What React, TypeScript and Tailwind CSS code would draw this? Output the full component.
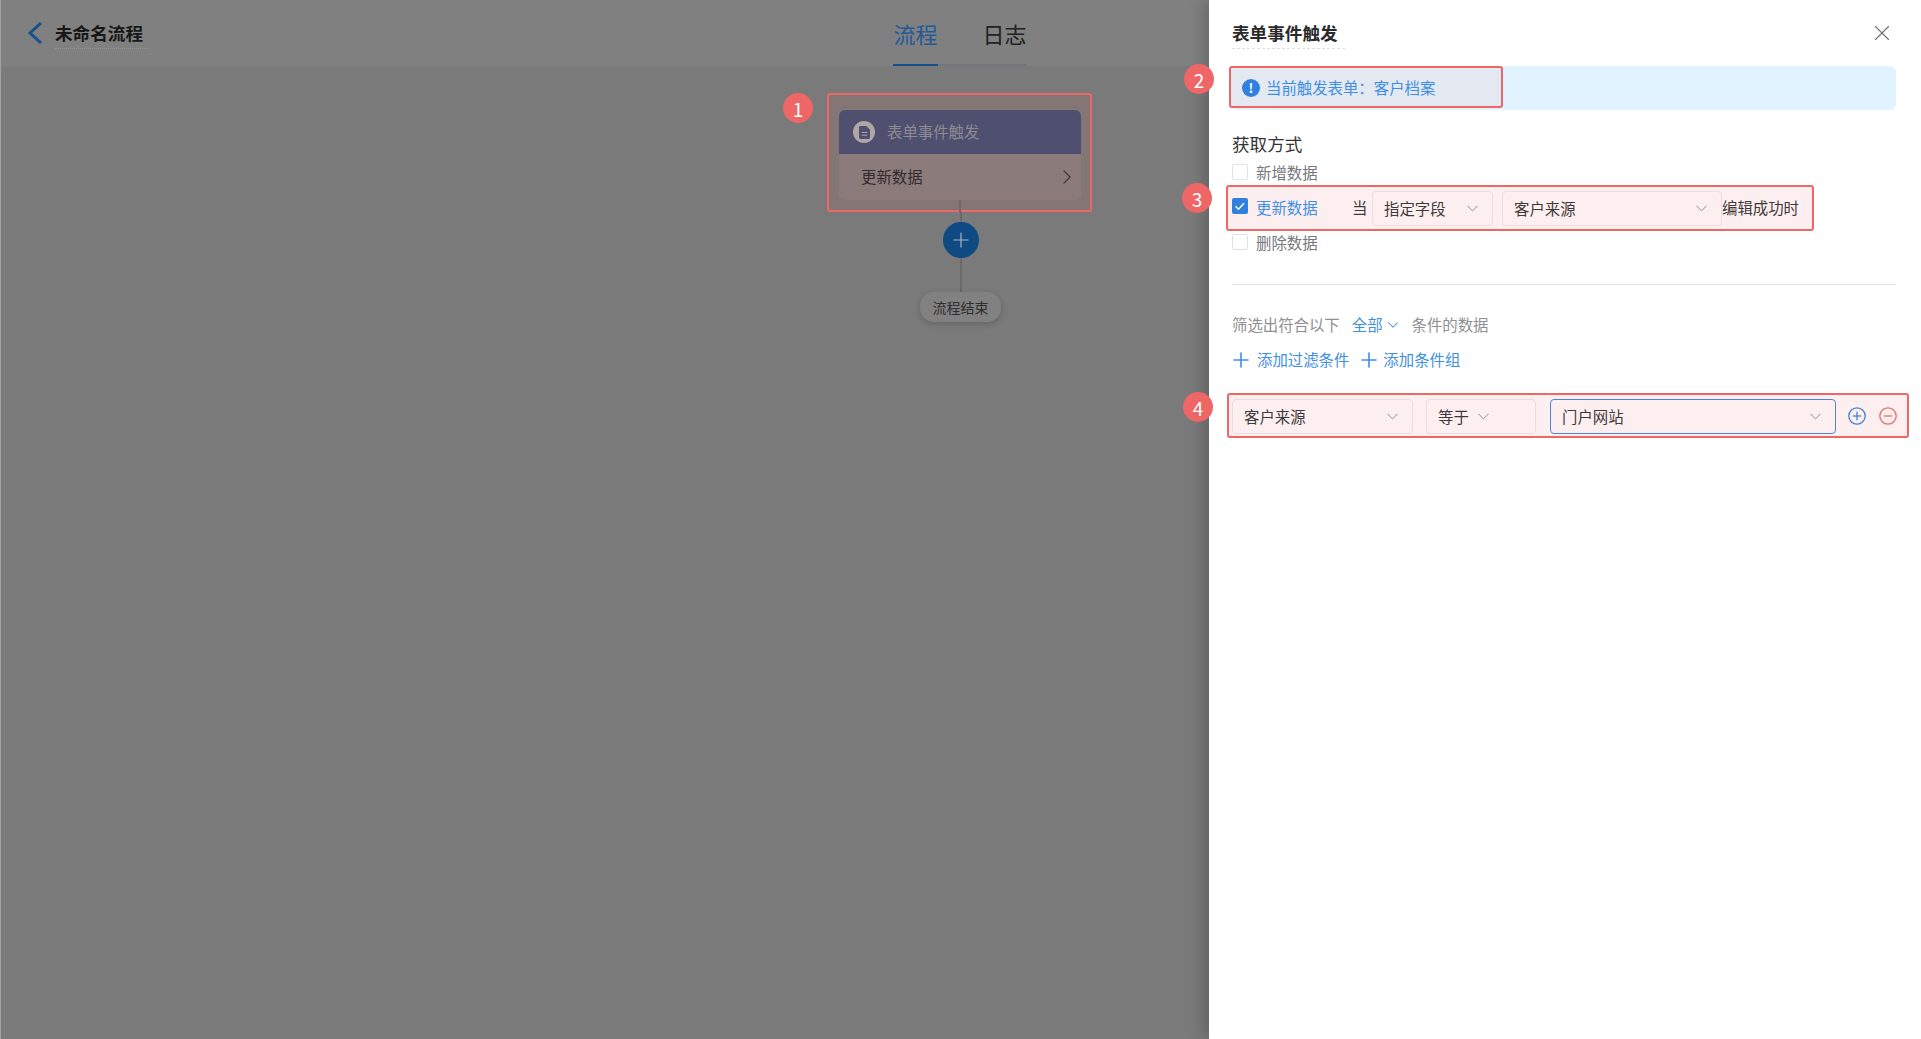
import React from 'react'
import { ChevronDown, ChevronRight, Plus, X } from 'lucide-react'

const Badge = ({ n, className }: { n: number; className: string }) => (
  <span
    className={`absolute flex h-[30px] w-[30px] items-center justify-center rounded-full bg-[#ee6666] text-[19px] leading-none text-white ${className}`}
  >
    {n}
  </span>
)

const Check = ({ checked = false }: { checked?: boolean }) =>
  checked ? (
    <span className="flex h-4 w-4 items-center justify-center rounded-[2px] bg-[#2f80e0]">
      <svg viewBox="0 0 16 16" className="h-4 w-4" fill="none" stroke="#fff" strokeWidth="1.5">
        <path d="M3.5 8.2l3 3 5.5-6" />
      </svg>
    </span>
  ) : (
    <span className="block h-4 w-4 rounded-[2px] border border-[#dfdfe6] bg-white" />
  )

const Select = ({ label, className, focused = false, tight = false }: { label: string; className: string; focused?: boolean; tight?: boolean }) => (
  <div
    className={`flex h-[35px] items-center rounded-[4px] border pl-[11px] text-[15.4px] text-[#3d3a3a] ${
      tight ? 'gap-[5px]' : 'justify-between pr-[10px]'
    } ${focused ? 'border-[#4a86d4]' : 'border-[#e8dde1]'} ${className}`}
  >
    <span className="mt-[1px]">{label}</span>
    <ChevronDown size={19} strokeWidth={1.2} className="text-[#87878c]" />
  </div>
)

const CheckRow = ({ label }: { label: string }) => (
  <div className="flex h-[24px] items-center gap-2 text-[15.4px] text-[#77777c]">
    <span className="-mt-[3px]">
      <Check />
    </span>
    <span>{label}</span>
  </div>
)

const RoundIcon = ({ minus = false }: { minus?: boolean }) => (
  <svg viewBox="0 0 18 18" className="h-[18px] w-[18px]" fill="none" stroke={minus ? '#e66a6a' : '#3f82d6'} strokeWidth="1.3">
    <circle cx="9" cy="9" r="8.2" />
    <path d="M4.8 9h8.4" />
    {!minus && <path d="M9 4.8v8.4" />}
  </svg>
)

export default function App() {
  return (
    <div
      className="relative h-screen overflow-hidden border-l border-[#a3a3a3] bg-[#7a7a7b]"
      style={{ fontFamily: '"Noto Sans CJK SC", "Noto Sans", sans-serif' }}
    >
      {/* Header */}
      <header className="grid h-[66px] grid-cols-[1fr_auto_1fr] bg-[#808080]">
        <div className="flex items-start pl-[26px]">
          <svg viewBox="0 0 16 24" className="mt-[21px] h-6 w-4" fill="none" stroke="#15508f" strokeWidth="3">
            <path d="M14 2L3 12l11 10" />
          </svg>
          <div className="ml-3 mt-[20px] w-[94px] border-b border-dotted border-[#939393] pb-[3px] text-[17.6px] font-bold leading-[25px] text-[#171717]">
            未命名流程
          </div>
        </div>
        <div className="-ml-[2px] flex h-[66px] gap-[45px] border-b-2 border-[#75767b] text-[22px]">
          <span className="-mb-[2px] h-[66px] border-b-2 border-[#15508f] pt-[17px] leading-[32px] text-[#1f5a99]">流程</span>
          <span className="pt-[17px] leading-[32px] text-[#222222]">日志</span>
        </div>
        <div />
      </header>

      {/* Flow canvas */}
      <main className="flex flex-col items-center pt-[27px]">
        <div className="relative -ml-[3px] w-[265px] rounded-[3px] border-2 border-[#ee6666] bg-[#857676] pl-[10px] pt-[15px]">
          <Badge n={1} className="-left-[46px] -top-[2px]" />
          <div className="w-[242px] overflow-hidden rounded-[6px] bg-[#8c7b7b]">
            <div className="flex h-[44px] items-center gap-[12px] bg-[#4f5070] pl-[14px] text-[15.4px] text-[#8d8a91]">
              <span className="flex h-[22px] w-[22px] items-center justify-center rounded-full bg-[#b0a7a5]">
                <svg viewBox="0 0 12 14" className="h-[13px] w-[11px]">
                  <path fill="#4f5070" d="M1.5 0H8l4 4v8.5a1.5 1.5 0 0 1-1.5 1.5h-9A1.5 1.5 0 0 1 0 12.500v-11A1.500 1.500 0 0 1 1.500 0z" />
                  <path stroke="#b0a7a5" strokeWidth="1" d="M3 7h6M3 10h6" />
                </svg>
              </span>
              表单事件触发
            </div>
            <div className="flex h-[46px] items-center justify-between pl-[22px] pr-[2px] text-[15.4px] text-[#332c2c]">
              更新数据
              <ChevronRight size={24} strokeWidth={1.2} className="text-[#3f3838]" />
            </div>
          </div>
          <div className="relative -mb-[2px] ml-[120px] h-[12px] w-[2px] bg-[#6a6a6a]" />
        </div>
        <div className="h-[10px] w-[2px] bg-[#6a6a6a]" />
        <div className="flex h-9 w-9 items-center justify-center rounded-full bg-[#0f4a82]">
          <Plus size={24} strokeWidth={1.2} className="text-[#a9b6c6]" />
        </div>
        <div className="h-[34px] w-[2px] bg-[#6a6a6a]" />
        <div className="-ml-[1px] flex h-[30px] w-[81px] items-center justify-center rounded-[14px] bg-[#818181] text-[14px] text-[#2f2f2f] shadow-[0_2px_6px_rgba(0,0,0,0.18)]">
          流程结束
        </div>
      </main>

      {/* Drawer */}
      <aside className="absolute bottom-0 right-0 top-0 w-[712px] bg-white pl-[23px] pr-[25px] shadow-[-6px_0_14px_rgba(0,0,0,0.18)]">
        <div className="flex h-[66px] items-start justify-between">
          <div className="mt-[20px] w-[113px] border-b border-dashed border-[#dddde3] pb-[3px] text-[17.6px] font-bold leading-[25px] text-[#2a2a2a]">
            表单事件触发
          </div>
          <X size={26} strokeWidth={1} className="mr-[1px] mt-[20px] text-[#6f6f74]" />
        </div>

        <div className="relative -ml-[1px] flex h-[44px] items-center rounded-[6px] bg-[#e1f3fe]">
          <div className="absolute -left-[2px] top-0 h-[42px] w-[274px] rounded-[3px] border-2 border-[#ee6666] bg-[#e3e8f1]" />
          <Badge n={2} className="-left-[47px] -top-[2px]" />
          <div className="relative ml-[11px] flex items-center gap-[6px] text-[15.4px] text-[#3f8fe6]">
            <span className="flex h-[18px] w-[18px] items-center justify-center rounded-full bg-[#2f80e0] text-[13px] font-bold leading-none text-white">!</span>
            当前触发表单：客户档案
          </div>
        </div>

        <div className="mt-[21px] text-[17.6px] leading-[26px] text-[#333333]">获取方式</div>
        <div className="mt-[4px]">
          <CheckRow label="新增数据" />
        </div>

        <div className="relative -ml-[6px] flex h-[46px] w-[588px] items-center rounded-[3px] border-2 border-[#ee6666] bg-[#fdeff0] pl-[4px] text-[15.4px]">
          <Badge n={3} className="-left-[46px] -top-[4px]" />
          <span className="-mt-[4px]">
            <Check checked />
          </span>
          <span className="ml-2 w-[96px] text-[#3f8fe6]">更新数据</span>
          <span className="w-[20px] text-[#3d3a3a]">当</span>
          <Select label="指定字段" className="w-[121px]" />
          <Select label="客户来源" className="ml-[9px] w-[220px]" />
          <span className="text-[#3d3a3a]">编辑成功时</span>
        </div>

        <CheckRow label="删除数据" />

        <div className="mt-[29px] h-px bg-[#e2e2ea]" />

        <div className="mt-[29px] flex h-[22px] items-center text-[15.4px] text-[#8f8f94]">
          <span>筛选出符合以下</span>
          <span className="ml-3 text-[#3f8fe6]">全部</span>
          <ChevronDown size={18} strokeWidth={1.4} className="ml-[1px] text-[#3f8fe6]" />
          <span className="ml-[10px]">条件的数据</span>
        </div>

        <div className="mt-[13px] flex h-[22px] items-center text-[15.4px] text-[#3f8fe6]">
          <Plus size={24} strokeWidth={1.6} className="-ml-[3px]" />
          <span className="ml-[4px]">添加过滤条件</span>
          <Plus size={24} strokeWidth={1.6} className="ml-[8px]" />
          <span className="ml-[2px]">添加条件组</span>
        </div>

        <div className="relative -ml-[5px] mt-[22px] flex h-[45px] w-[682px] items-center rounded-[3px] border-2 border-[#ee6666] bg-[#fdeff0] pl-[3px]">
          <Badge n={4} className="-left-[46px] -top-[3px]" />
          <Select label="客户来源" className="mt-[1px] w-[181px]" />
          <Select label="等于" tight className="ml-[13px] mt-[1px] w-[110px]" />
          <Select label="门户网站" focused className="ml-[14px] mt-[1px] w-[286px]" />
          <span className="ml-[12px]">
            <RoundIcon />
          </span>
          <span className="ml-[13px]">
            <RoundIcon minus />
          </span>
        </div>
      </aside>
    </div>
  )
}
